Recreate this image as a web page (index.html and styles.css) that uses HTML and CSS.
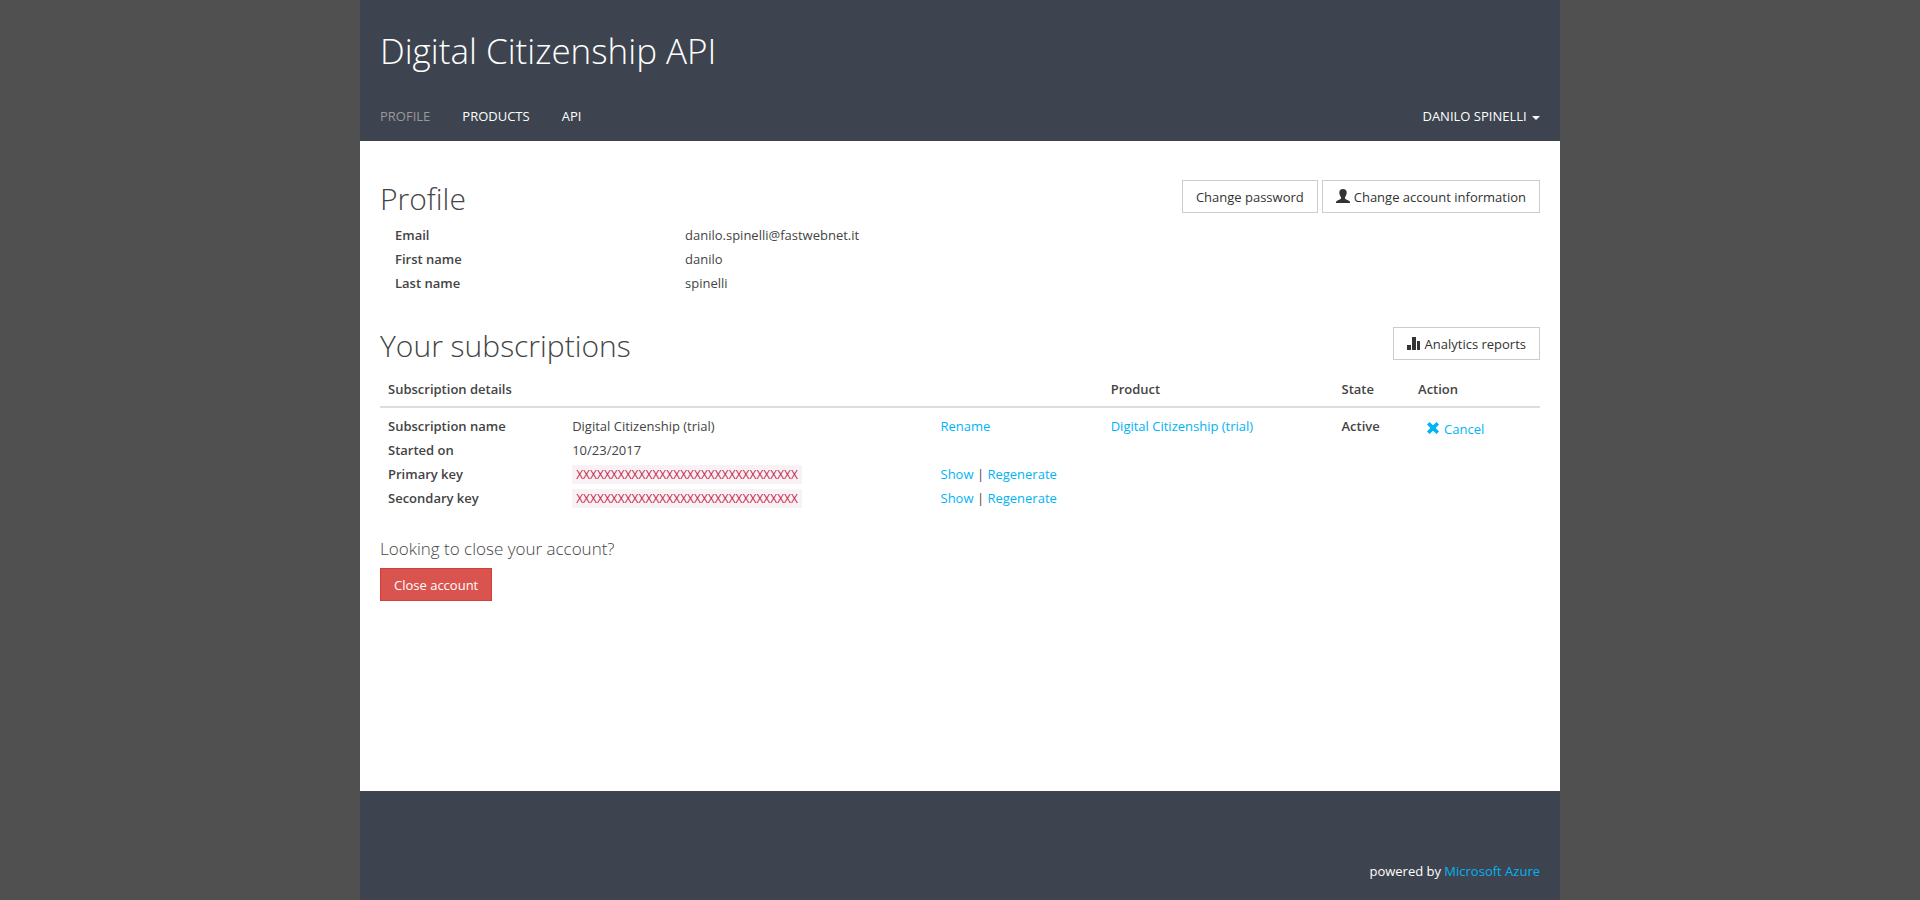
FILE: index.html
```html
<!DOCTYPE html>
<html lang="en">
<head>
<meta charset="utf-8">
<meta name="viewport" content="width=device-width, initial-scale=1">
<title>Profile - Digital Citizenship API</title>
<link rel="stylesheet" href="styles.css">
</head>
<body>
<div class="page">
  <header class="header">
    <h1 class="site-title">Digital Citizenship API</h1>
    <nav class="nav">
      <a class="nav-link active" href="#profile">Profile</a>
      <a class="nav-link" href="#products">Products</a>
      <a class="nav-link" href="#api">API</a>
      <button class="nav-link user-menu" type="button" aria-haspopup="true">Danilo Spinelli <span class="caret"></span></button>
    </nav>
  </header>

  <main class="main">
    <section class="section">
      <div class="section-head">
        <h2 class="section-title">Profile</h2>
        <div class="actions">
          <button class="btn" type="button">Change password</button>
          <button class="btn" type="button"><svg class="icon" viewBox="0 0 14 14" aria-hidden="true"><path d="M7 0C4.600 0 3.300 1.300 3.300 3.400c0 1.900.7 3.500 1.700 4.500v1.300c0 .5-.3.8-.8 1L1 11.700c-.7.400-1 .8-1 1.500v.8h14v-.8c0-.7-.3-1.100-1-1.500l-3.200-1.500c-.5-.2-.8-.5-.8-1V7.900c1-1 1.700-2.600 1.700-4.500C10.700 1.300 9.400 0 7 0z"/></svg>Change account information</button>
        </div>
      </div>
      <dl class="profile-list">
        <dt>Email</dt><dd>danilo.spinelli@fastwebnet.it</dd>
        <dt>First name</dt><dd>danilo</dd>
        <dt>Last name</dt><dd>spinelli</dd>
      </dl>
    </section>

    <section class="section">
      <div class="section-head">
        <h2 class="section-title">Your subscriptions</h2>
        <div class="actions">
          <button class="btn" type="button"><svg class="icon" viewBox="0 0 14 14" aria-hidden="true"><path d="M0 9h4v5H0zM5 1h4v13H5zM10 5h3v9h-3z"/></svg>Analytics reports</button>
        </div>
      </div>
      <table class="table">
        <thead>
          <tr><th class="col-details" scope="col">Subscription details</th><th class="col-product" scope="col">Product</th><th class="col-state" scope="col">State</th><th scope="col">Action</th></tr>
        </thead>
        <tbody>
          <tr>
            <td>
              <div class="detail"><strong>Subscription name</strong><span>Digital Citizenship (trial)</span><span><a href="#rename">Rename</a></span></div>
              <div class="detail"><strong>Started on</strong><span>10/23/2017</span></div>
              <div class="detail"><strong>Primary key</strong><span><code class="key">XXXXXXXXXXXXXXXXXXXXXXXXXXXXXXXX</code></span><span><a href="#show-primary">Show</a> | <a href="#regenerate-primary">Regenerate</a></span></div>
              <div class="detail"><strong>Secondary key</strong><span><code class="key">XXXXXXXXXXXXXXXXXXXXXXXXXXXXXXXX</code></span><span><a href="#show-secondary">Show</a> | <a href="#regenerate-secondary">Regenerate</a></span></div>
            </td>
            <td><a href="#product">Digital Citizenship (trial)</a></td>
            <td><strong>Active</strong></td>
            <td><button class="btn-link" type="button"><svg class="icon" viewBox="0 0 14 14" aria-hidden="true"><path d="M3.500 1 7 4.300 10.500 1 13 3.500 9.700 7 13 10.500 10.500 13 7 9.700 3.500 13 1 10.500 4.300 7 1 3.500z"/></svg>Cancel</button></td>
          </tr>
        </tbody>
      </table>
    </section>

    <section class="section">
      <h3 class="close-title">Looking to close your account?</h3>
      <button class="btn btn-danger" type="button">Close account</button>
    </section>
  </main>

  <footer class="footer">powered by <a href="#azure">Microsoft Azure</a></footer>
</div>
</body>
</html>
```
FILE: styles.css
```css
* {
  box-sizing: border-box;
}

body {
  margin: 0;
  background: #505050;
  color: #444;
  font: 13px/20px "Segoe UI", "Open Sans", "Noto Sans", sans-serif;
}

a {
  color: #00b3f5;
  text-decoration: none;
}

button {
  font: inherit;
  cursor: pointer;
}

strong,
dt,
th {
  font-weight: 600;
}

.page {
  display: flex;
  flex-direction: column;
  max-width: 1200px;
  min-height: 100vh;
  margin: 0 auto;
  background: #fff;
}

.header {
  padding: 31px 20px 15px;
  background: #3d444f;
  color: #fff;
}

.site-title {
  margin: 0 0 35px;
  font-size: 35px;
  font-weight: 300;
  line-height: 40px;
}

.nav {
  display: flex;
  flex-wrap: wrap;
  gap: 32px;
}

.nav-link {
  padding: 0;
  border: 0;
  background: none;
  color: #fff;
  text-transform: uppercase;
}

.nav-link.active {
  color: #999;
}

.user-menu {
  margin-left: auto;
}

.caret {
  display: inline-block;
  margin-left: 2px;
  border: 4px solid transparent;
  border-top-color: currentColor;
  border-bottom: 0;
  vertical-align: middle;
}

.main {
  display: flex;
  flex: 1;
  flex-direction: column;
  gap: 29px;
  padding: 39px 20px;
}

.section-head {
  display: flex;
  flex-wrap: wrap;
  align-items: flex-start;
  justify-content: space-between;
}

.section-title {
  margin: 0;
  font-size: 30px;
  font-weight: 300;
  line-height: 38px;
}

.actions {
  display: flex;
  gap: 4px;
}

.btn {
  padding: 6px 13px 5px;
  border: 1px solid #ccc;
  background: #fff;
  color: #333;
}

.icon {
  width: 14px;
  height: 14px;
  margin-right: 4px;
  fill: currentColor;
  vertical-align: -1px;
}

.profile-list {
  display: grid;
  grid-template-columns: 1fr 3fr;
  margin: 5px 0 0;
  padding-bottom: 3px;
  line-height: 24px;
}

.profile-list dt,
.profile-list dd {
  margin: 0;
  padding: 0 15px;
}

.table {
  width: 100%;
  margin-top: 6px;
  border-collapse: collapse;
  table-layout: fixed;
}

.table th {
  padding: 8px 8px 7px;
  border-bottom: 2px solid #ddd;
  text-align: left;
}

.table td {
  padding: 6px 8px 0;
  line-height: 24px;
  vertical-align: top;
}

.col-details {
  width: 62.3%;
}

.col-product {
  width: 19.9%;
}

.col-state {
  width: 6.6%;
}

.detail {
  display: grid;
  grid-template-columns: 1fr 2fr 1fr;
  margin: 0 -15px;
}

.detail > * {
  padding: 0 15px;
}

.key {
  padding: 1px 4px;
  background: #f9f2f4;
  color: #c7254e;
  font: inherit;
  font-size: 12px;
  line-height: 16px;
}

.btn-link {
  padding: 5px 8px;
  border: 0;
  background: none;
  color: #00b3f5;
  line-height: 20px;
}

.close-title {
  margin: 0 0 9px;
  font-size: 17px;
  font-weight: 300;
  line-height: 20px;
}

.btn-danger {
  border-color: #d43f3a;
  background: #d9534f;
  color: #fff;
}

.footer {
  padding: 70px 20px 19px;
  background: #3d444f;
  color: #fff;
  text-align: right;
}
```
